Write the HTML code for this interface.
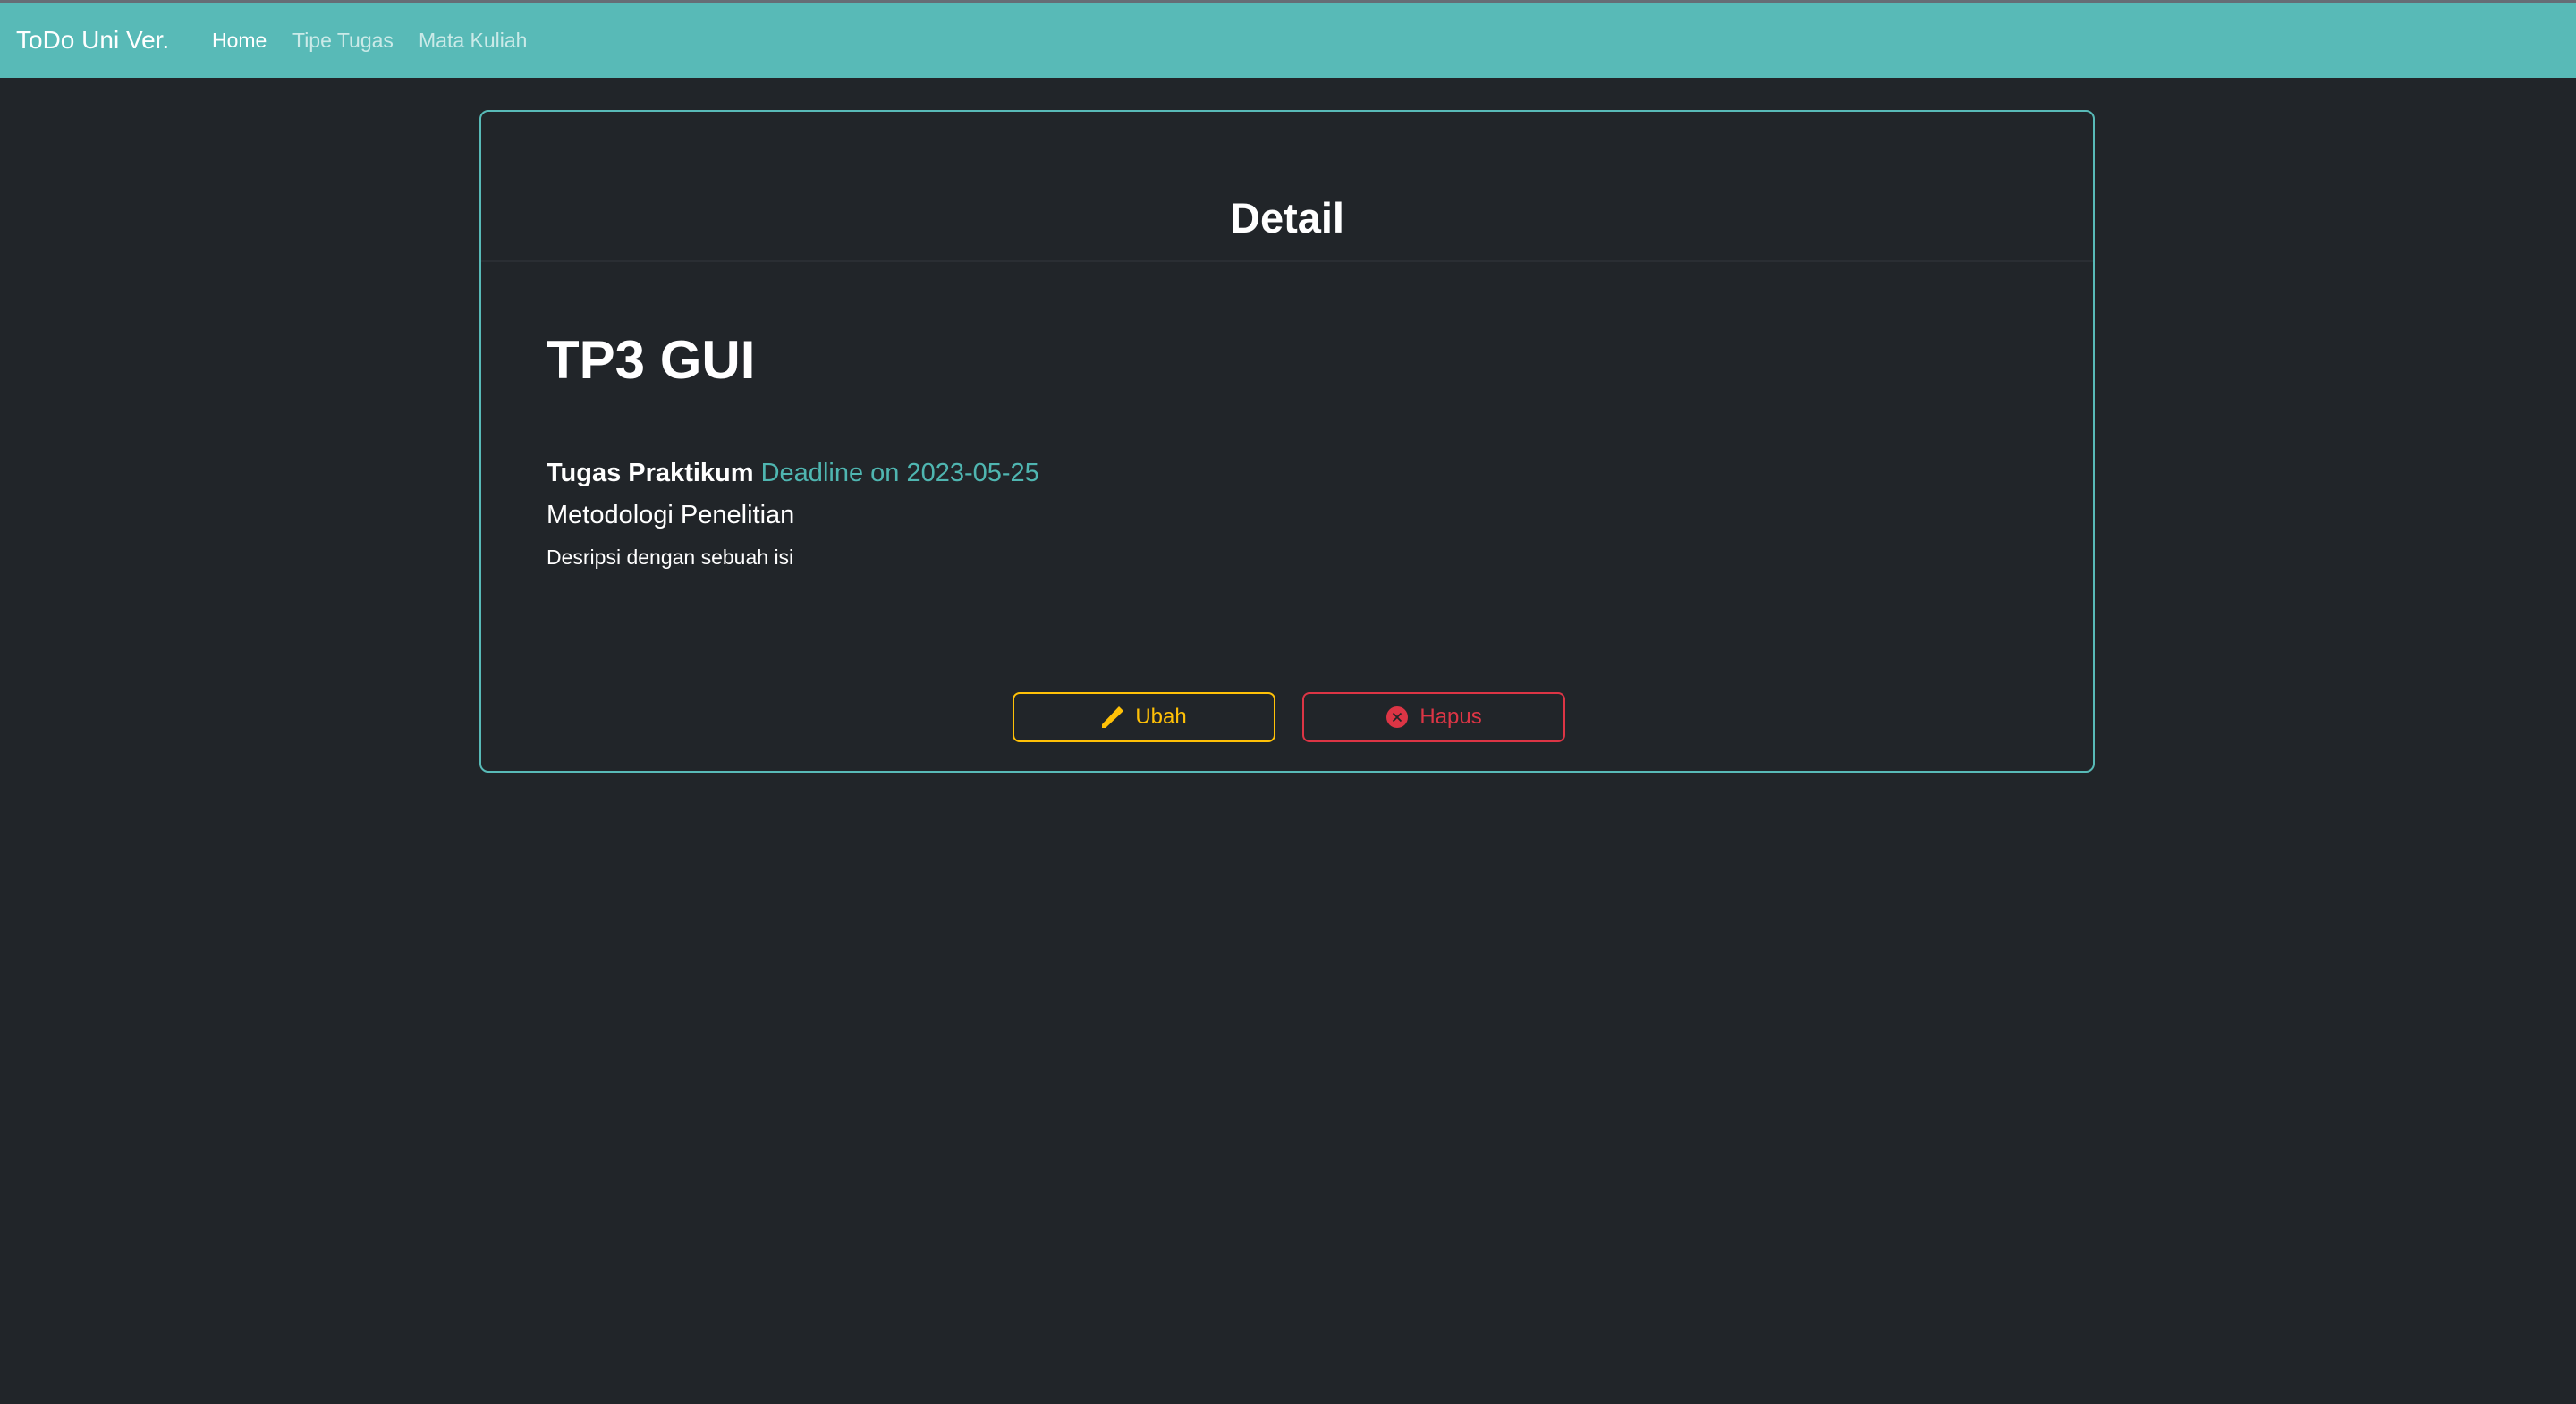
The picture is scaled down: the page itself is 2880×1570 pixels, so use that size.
<!DOCTYPE html>
<html><head><meta charset="utf-8"><style>
*{margin:0;padding:0;box-sizing:border-box}
html,body{width:2880px;height:1570px;background:#212529;overflow:hidden;font-family:"Liberation Sans",sans-serif;color:#fff}
.topline{position:absolute;left:0;top:0;width:2880px;height:3px;background:#666d75}
.nav{position:absolute;left:0;top:3px;width:2880px;height:84px;background:#58bab7}
.nav span{position:absolute;top:0;line-height:84px;white-space:nowrap}
.brand{left:18px;font-size:28px;color:#fff}
.l{font-size:23px;color:#cbeae8}
.card{position:absolute;left:536px;top:123px;width:1806px;height:741px;border:2px solid #58bab7;border-radius:10px}
.hdr{position:absolute;left:0;top:0;width:100%;height:168px;border-bottom:2px solid #2a2e33;background:#212529;border-radius:10px 10px 0 0}
.t{position:absolute;white-space:nowrap}
.btn{position:absolute;top:649px;height:56px;border:2px solid;border-radius:8px;font-size:24px;display:flex;align-items:center;justify-content:center;gap:12px}
</style></head><body>
<div class="topline"></div>
<div class="nav">
<span class="brand">ToDo Uni Ver.</span>
<span class="l" style="left:237px;color:#fff">Home</span>
<span class="l" style="left:327px">Tipe Tugas</span>
<span class="l" style="left:468px">Mata Kuliah</span>
</div>
<div class="card">
<div class="hdr"></div>
<div class="t" style="left:0;width:100%;text-align:center;top:89px;font-size:47px;font-weight:bold;line-height:60px">Detail</div>
<div class="t" style="left:73px;top:238px;font-size:60px;font-weight:bold;line-height:80px">TP3 GUI</div>
<div class="t" style="left:73px;top:386px;font-size:29px;line-height:36px"><b>Tugas Praktikum</b> <span style="color:#4fb6b1">Deadline on 2023-05-25</span></div>
<div class="t" style="left:73px;top:433px;font-size:29px;line-height:36px">Metodologi Penelitian</div>
<div class="t" style="left:73px;top:483px;font-size:23px;line-height:30px">Desripsi dengan sebuah isi</div>
<div class="btn" style="left:594px;width:294px;border-color:#ffc107;color:#ffc107">
<svg width="26" height="26" viewBox="0 0 26 26"><path d="M1 21 L1 25 L5 25 L25 6 L20 1 Z" fill="#ffc107"/></svg>Ubah</div>
<div class="btn" style="left:918px;width:294px;border-color:#dc3545;color:#dc3545">
<svg width="26" height="26" viewBox="0 0 26 26"><circle cx="13" cy="13" r="12" fill="#dc3545"/><path d="M8.5 8.5 L17.5 17.5 M17.5 8.5 L8.5 17.5" stroke="#212529" stroke-width="1.8"/></svg>Hapus</div>
</div>
</body></html>
